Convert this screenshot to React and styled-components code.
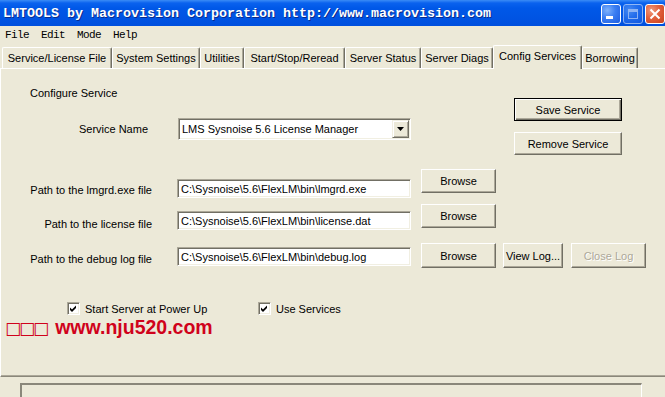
import React from 'react';
import styled, { createGlobalStyle } from 'styled-components';

const GlobalStyle = createGlobalStyle`
  html, body {
    margin: 0;
    padding: 0;
    background: #ece9d8;
    overflow: hidden;
  }
`;

const Window = styled.div`
  width: 665px;
  height: 397px;
  display: flex;
  flex-direction: column;
  background: #ece9d8;
  font-family: "Liberation Sans", Arial, sans-serif;
  font-size: 11px;
  color: #000;
  overflow: hidden;
`;

const TitleBar = styled.div`
  flex: none;
  height: 26px;
  display: flex;
  align-items: center;
  padding-left: 3px;
  background: linear-gradient(to bottom, #3b8cf6 0px, #0a62ee 3px, #0058e8 8px, #0054e3 18px, #0050de 26px);
`;

const TitleText = styled.div`
  flex: 1;
  font-family: "Liberation Mono", monospace;
  font-weight: bold;
  font-size: 13.33px;
  color: #fff;
  text-shadow: 1px 1px 0 #0a2c8c;
  white-space: nowrap;
`;

const CaptionButtons = styled.div`
  display: flex;
  gap: 2px;
  padding-top: 1px;
`;

const CaptionButton = styled.div`
  width: 20px;
  height: 20px;
  box-sizing: border-box;
  border: 1px solid #fff;
  border-radius: 3px;
  display: flex;
  align-items: center;
  justify-content: center;
  background: ${p => (p.$close
    ? 'radial-gradient(circle at 30% 30%, #f09a7c 0%, #e2603c 45%, #c8421c 100%)'
    : 'radial-gradient(circle at 30% 30%, #7fb2fb 0%, #3a7ef2 45%, #1c5ce0 100%)')};
  opacity: ${p => (p.$dim ? 0.55 : 1)};
`;

const MenuBar = styled.div`
  flex: none;
  height: 19px;
  display: flex;
  align-items: center;
  gap: 12px;
  padding-left: 5px;
  font-family: "Liberation Mono", monospace;
  font-size: 11px;
  letter-spacing: -0.6px;
`;

const MenuItem = styled.span`
  line-height: 19px;
`;

const TabStrip = styled.div`
  flex: none;
  height: 23px;
  display: flex;
  align-items: flex-end;
  padding-left: 2px;
  position: relative;
  z-index: 1;
`;

const Tab = styled.div`
  box-sizing: border-box;
  width: ${p => p.$w}px;
  height: ${p => (p.$active ? 24 : 21)}px;
  margin-bottom: ${p => (p.$active ? -1 : 0)}px;
  display: flex;
  justify-content: center;
  align-items: flex-start;
  padding-top: ${p => (p.$active ? 4 : 4)}px;
  border-top: 1px solid #fff;
  border-left: 1px solid #fff;
  border-right: 1px solid #716f64;
  border-top-left-radius: 2px;
  border-top-right-radius: 2px;
  box-shadow: inset -1px 0 0 #aca899;
  background: #ece9d8;
  white-space: nowrap;
`;

const Panel = styled.div`
  flex: none;
  height: 309px;
  box-sizing: border-box;
  border-top: 1px solid #fff;
  border-left: 1px solid #fff;
  border-bottom: 1px solid #8a877a;
  box-shadow: inset 0 -1px 0 #aca899;
  display: flex;
  flex-direction: column;
`;

const TopBlock = styled.div`
  display: flex;
  padding-top: 18px;
`;

const LeftCol = styled.div`
  width: 513px;
  display: flex;
  flex-direction: column;
`;

const Heading = styled.div`
  margin-left: 29px;
  line-height: 13px;
`;

const ServiceRow = styled.div`
  display: flex;
  margin-top: 18px;
`;

const Label = styled.div`
  width: ${p => p.$w}px;
  text-align: right;
  line-height: ${p => p.$lh || 13}px;
  margin-top: ${p => p.$top || 0}px;
  white-space: nowrap;
`;

const Sunken = styled.div`
  box-sizing: border-box;
  width: ${p => p.$w}px;
  height: ${p => p.$h}px;
  margin-left: ${p => p.$left}px;
  margin-top: ${p => p.$top || 0}px;
  border-top: 1px solid #aca899;
  border-left: 1px solid #aca899;
  border-right: 1px solid #fff;
  border-bottom: 1px solid #fff;
  box-shadow: inset 1px 1px 0 #716f64, inset -1px -1px 0 #f1efe2;
  background: #fff;
  display: flex;
  align-items: center;
  padding-left: 3px;
  white-space: nowrap;
  overflow: hidden;
`;

const FieldText = styled.span`
  flex: 1;
`;

const DropButton = styled.div`
  width: 17px;
  height: 18px;
  box-sizing: border-box;
  margin-right: 1px;
  background: #ece9d8;
  border-top: 1px solid #f1efe2;
  border-left: 1px solid #f1efe2;
  border-right: 1px solid #716f64;
  border-bottom: 1px solid #716f64;
  box-shadow: inset 1px 1px 0 #fff, inset -1px -1px 0 #aca899;
  display: flex;
  align-items: center;
  justify-content: center;
`;

const RightCol = styled.div`
  display: flex;
  flex-direction: column;
`;

const Button = styled.div`
  box-sizing: border-box;
  width: ${p => p.$w}px;
  height: ${p => p.$h || 24}px;
  margin-top: ${p => p.$top || 0}px;
  margin-left: ${p => p.$left || 0}px;
  background: #ece9d8;
  border: 1px solid;
  border-color: ${p => (p.$default ? '#000' : '#fff #716f64 #716f64 #fff')};
  box-shadow: ${p => (p.$default
    ? 'inset 1px 1px 0 #fff, inset -1px -1px 0 #716f64, inset -2px -2px 0 #aca899'
    : 'inset -1px -1px 0 #aca899')};
  display: flex;
  align-items: center;
  justify-content: center;
  white-space: nowrap;
  color: ${p => (p.$disabled ? '#aca899' : '#000')};
  text-shadow: ${p => (p.$disabled ? '1px 1px 0 #fff' : 'none')};
  flex: none;
`;

const PathRow = styled.div`
  display: flex;
  align-items: flex-start;
  margin-top: ${p => p.$top}px;
`;

const CheckRow = styled.div`
  display: flex;
  align-items: center;
  margin-top: 34px;
  padding-left: 66px;
`;

const CheckGroup = styled.div`
  display: flex;
  align-items: center;
  gap: 5px;
  width: ${p => (p.$w ? `${p.$w}px` : 'auto')};
`;

const Box = styled.div`
  width: 13px;
  height: 13px;
  box-sizing: border-box;
  background: #fff;
  border-top: 1px solid #aca899;
  border-left: 1px solid #aca899;
  border-right: 1px solid #fff;
  border-bottom: 1px solid #fff;
  box-shadow: inset 1px 1px 0 #716f64, inset -1px -1px 0 #f1efe2;
  flex: none;
`;

const Watermark = styled.div`
  margin-top: 1px;
  padding-left: 4px;
  color: #d0021b;
  font-family: "Liberation Sans", Arial, sans-serif;
  font-weight: bold;
  font-size: 19.5px;
  line-height: 22px;
  display: flex;
  align-items: baseline;
  gap: 8px;
`;

const Tofu = styled.span`
  font-family: "DejaVu Sans", sans-serif;
  font-weight: normal;
  font-size: 17px;
  letter-spacing: -2px;
`;

const StatusArea = styled.div`
  flex: 1;
  padding: 6px 0 0 20px;
`;

const StatusBox = styled.div`
  width: 622px;
  height: 30px;
  box-sizing: border-box;
  border-top: 2px solid #8a877a;
  border-left: 2px solid #8a877a;
  border-right: 1px solid #fff;
`;

const tabs = [
  ['Service/License File', 110],
  ['System Settings', 88],
  ['Utilities', 44],
  ['Start/Stop/Reread', 101],
  ['Server Status', 76],
  ['Server Diags', 72],
  ['Config Services', 89, true],
  ['Borrowing', 56],
];

const Check = () => (
  <svg width="11" height="11" viewBox="0 0 11 11">
    <path d="M2 4.5 L4 6.5 L8 2.5 L8 5 L4 9 L2 7 Z" fill="#000" />
  </svg>
);

export default function App() {
  return (
    <Window>
      <GlobalStyle />
      <TitleBar>
        <TitleText>LMTOOLS by Macrovision Corporation http://www.macrovision.com</TitleText>
        <CaptionButtons>
          <CaptionButton>
            <svg width="18" height="18" viewBox="0 0 18 18">
              <rect x="4" y="11" width="7" height="3" fill="#fff" />
            </svg>
          </CaptionButton>
          <CaptionButton $dim>
            <svg width="18" height="18" viewBox="0 0 18 18">
              <rect x="4.5" y="4.5" width="9" height="9" fill="none" stroke="#fff" />
              <rect x="4" y="4" width="10" height="3" fill="#fff" />
            </svg>
          </CaptionButton>
          <CaptionButton $close>
            <svg width="18" height="18" viewBox="0 0 18 18">
              <path d="M4.5 4.5 L13.5 13.5 M13.5 4.5 L4.5 13.5" stroke="#fff" strokeWidth="2" />
            </svg>
          </CaptionButton>
        </CaptionButtons>
      </TitleBar>

      <MenuBar>
        <MenuItem>File</MenuItem>
        <MenuItem>Edit</MenuItem>
        <MenuItem>Mode</MenuItem>
        <MenuItem>Help</MenuItem>
      </MenuBar>

      <TabStrip>
        {tabs.map(([name, w, active]) => (
          <Tab key={name} $w={w} $active={active}>{name}</Tab>
        ))}
      </TabStrip>

      <Panel>
        <TopBlock>
          <LeftCol>
            <Heading>Configure Service</Heading>
            <ServiceRow>
              <Label $w={147} $lh={22}>Service Name</Label>
              <Sunken $w={233} $h={22} $left={30}>
                <FieldText>LMS Sysnoise 5.6 License Manager</FieldText>
                <DropButton>
                  <svg width="7" height="4" viewBox="0 0 7 4">
                    <path d="M0 0 H7 L3.5 4 Z" fill="#000" />
                  </svg>
                </DropButton>
              </Sunken>
            </ServiceRow>
          </LeftCol>
          <RightCol>
            <Button $w={108} $h={23} $top={11} $default>Save Service</Button>
            <Button $w={108} $h={23} $top={11}>Remove Service</Button>
          </RightCol>
        </TopBlock>

        <PathRow $top={14}>
          <Label $w={151} $top={15}>Path to the lmgrd.exe file</Label>
          <Sunken $w={234} $h={19} $left={25} $top={10}>{'C:\\Sysnoise\\5.6\\FlexLM\\bin\\lmgrd.exe'}</Sunken>
          <Button $w={75} $left={10}>Browse</Button>
        </PathRow>

        <PathRow $top={6}>
          <Label $w={151} $top={14}>Path to the license file</Label>
          <Sunken $w={234} $h={19} $left={25} $top={7}>{'C:\\Sysnoise\\5.6\\FlexLM\\bin\\license.dat'}</Sunken>
          <Button $w={75} $left={10}>Browse</Button>
        </PathRow>

        <PathRow $top={12}>
          <Label $w={151} $top={10}>Path to the debug log file</Label>
          <Sunken $w={234} $h={19} $left={25} $top={4}>{'C:\\Sysnoise\\5.6\\FlexLM\\bin\\debug.log'}</Sunken>
          <Button $w={75} $h={25} $left={10}>Browse</Button>
          <Button $w={60} $h={25} $left={7}>View Log...</Button>
          <Button $w={75} $h={25} $left={8} $disabled>Close Log</Button>
        </PathRow>

        <CheckRow>
          <CheckGroup $w={191}>
            <Box><Check /></Box>
            <span>Start Server at Power Up</span>
          </CheckGroup>
          <CheckGroup>
            <Box><Check /></Box>
            <span>Use Services</span>
          </CheckGroup>
        </CheckRow>

        <Watermark>
          <Tofu>□□□</Tofu>
          <span>www.nju520.com</span>
        </Watermark>
      </Panel>

      <StatusArea>
        <StatusBox />
      </StatusArea>
    </Window>
  );
}
